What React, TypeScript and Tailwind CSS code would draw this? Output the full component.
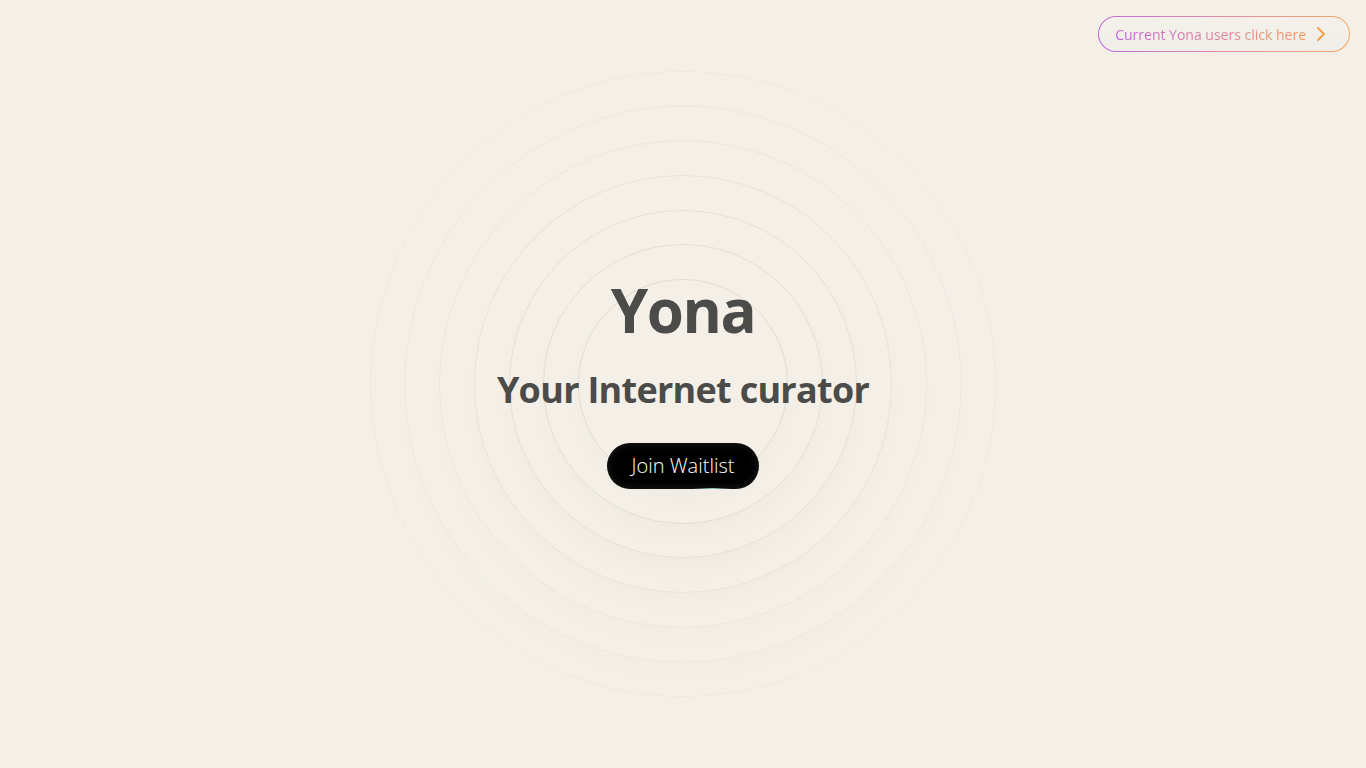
import { ChevronRight } from 'lucide-react';

const RINGS = [
  'w-[210px] h-[210px] border-[rgba(110,110,100,0.16)] shadow-[0_14px_24px_rgba(60,50,30,0.02)]',
  'w-[280px] h-[280px] border-[rgba(110,110,100,0.14)] shadow-[0_14px_24px_rgba(60,50,30,0.02)]',
  'w-[348px] h-[348px] border-[rgba(110,110,100,0.12)] shadow-[0_14px_24px_rgba(60,50,30,0.018)]',
  'w-[418px] h-[418px] border-[rgba(110,110,100,0.10)] shadow-[0_14px_24px_rgba(60,50,30,0.015)]',
  'w-[488px] h-[488px] border-[rgba(110,110,100,0.08)] shadow-[0_14px_24px_rgba(60,50,30,0.012)]',
  'w-[557px] h-[557px] border-[rgba(110,110,100,0.065)] shadow-[0_14px_24px_rgba(60,50,30,0.01)]',
  'w-[626px] h-[626px] border-[rgba(110,110,100,0.05)]',
  'w-[694px] h-[694px] border-[rgba(110,110,100,0.02)]',
];

export default function App() {
  return (
    <div className="relative h-screen w-full overflow-hidden bg-[#f5f0e7] font-['Open_Sans',sans-serif]">
      {/* rings behind the hero */}
      <div className="pointer-events-none absolute inset-0">
        {RINGS.map((cls, i) => (
          <div
            key={i}
            className={`absolute left-1/2 top-1/2 -translate-x-1/2 -translate-y-1/2 rounded-full border ${cls}`}
          />
        ))}
      </div>

      <div className="absolute right-4 top-4">
        <a className="block rounded-full bg-gradient-to-r from-[#c16ad9] via-[#e58aa6] to-[#f4a860] p-px">
          <span className="flex h-[34px] items-center gap-[3px] rounded-full bg-gradient-to-b from-[#f4f1ea] to-[#efeee9] pl-[16px] pr-[16px]">
            <span className="bg-gradient-to-r from-[#bf5fd6] via-[#e47ea0] to-[#f39a55] bg-clip-text text-[14px] text-transparent">
              Current Yona users click here
            </span>
            <ChevronRight className="h-[24px] w-[24px] text-[#f5a04c]" strokeWidth={2} />
          </span>
        </a>
      </div>

      <div className="relative flex h-full flex-col items-center justify-center">
        <h1 className="text-[60px] font-bold leading-[1] tracking-tight text-[#4b4b49]">Yona</h1>
        <h2 className="mt-[32px] text-[36px] font-bold leading-[1] tracking-[-0.02em] text-[#4b4b49]">
          Your Internet curator
        </h2>
        <button className="relative mt-[35px] h-[46px] overflow-hidden rounded-full bg-black px-[25px] text-[20px] font-light text-white shadow-[inset_0_0_8px_rgba(255,255,255,0.12)]">
          Join Waitlist
          <span className="absolute bottom-0 left-[85px] h-px w-[40px] bg-gradient-to-r from-transparent via-[#8fd0c0] to-transparent" />
        </button>
      </div>
    </div>
  );
}
